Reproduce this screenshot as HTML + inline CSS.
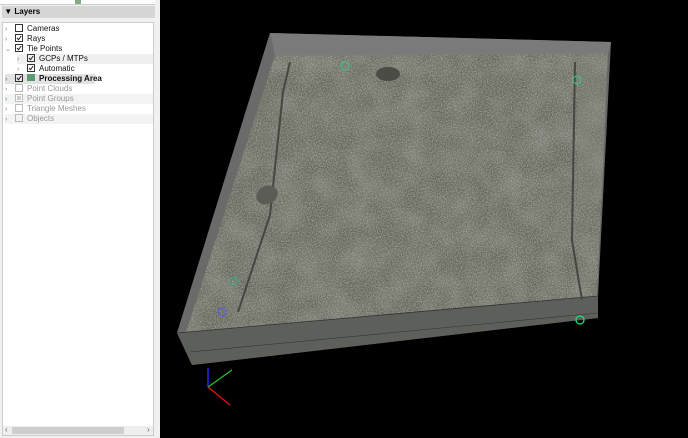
<!DOCTYPE html>
<html><head><style>
body{margin:0;width:688px;height:438px;background:#000;overflow:hidden;position:relative;font-family:"Liberation Sans",sans-serif;font-size:8px}
#panel{position:absolute;left:0;top:0;width:160px;height:438px;background:#f0f0f0}
#top{position:absolute;left:0;top:0;width:155px;height:4px;background:#fff;border-bottom:1px solid #ccc}
#hdr{position:absolute;left:2px;top:6px;width:153px;height:12px;background:#d6d6d6;font-weight:bold;font-size:8px;line-height:12px;color:#000}
#tree{position:absolute;left:2px;top:22px;width:152px;height:414px;background:#fff;border:1px solid #ccc;box-sizing:border-box}
.r{position:absolute;height:10px;line-height:10px;white-space:nowrap;color:#111}
.r.d{color:#999}
.cb{display:inline-block;width:6px;height:6px;border:1px solid #333;vertical-align:middle;margin:-2px 4px 0 0;position:relative}
.cb svg{position:absolute;left:0;top:0}
.d .cb{border-color:#bbb}
.ar{display:inline-block;width:10px;color:#888;font-size:7px}
#sb{position:absolute;left:3px;top:426px;width:150px;height:9px;background:#eee}
#sbt{position:absolute;left:12px;top:427px;width:112px;height:7px;background:#cdcdcd}
</style></head><body>
<div id="panel">
<div id="top"></div>
<div style="position:absolute;left:75px;top:0;width:6px;height:4px;background:#8a8"></div>
<div id="hdr">&nbsp;▼ Layers</div>
<div id="tree"></div>
<div class="r" style="left:5px;top:24px"><span class="ar">›</span><span class="cb"></span>Cameras</div>
<div class="r" style="left:5px;top:34px"><span class="ar">›</span><span class="cb"><svg width="6" height="6"><path d="M1 3 L2.5 4.7 L5.2 1" stroke="#222" fill="none"/></svg></span>Rays</div>
<div class="r" style="left:5px;top:44px"><span class="ar">⌄</span><span class="cb"><svg width="6" height="6"><path d="M1 3 L2.5 4.7 L5.2 1" stroke="#222" fill="none"/></svg></span>Tie Points</div>
<div class="r" style="left:17px;top:54px;width:136px;background:#f0f0f0"><span class="ar">›</span><span class="cb"><svg width="6" height="6"><path d="M1 3 L2.5 4.7 L5.2 1" stroke="#222" fill="none"/></svg></span>GCPs / MTPs</div>
<div class="r" style="left:17px;top:64px"><span class="ar">›</span><span class="cb"><svg width="6" height="6"><path d="M1 3 L2.5 4.7 L5.2 1" stroke="#222" fill="none"/></svg></span>Automatic</div>
<div class="r" style="left:5px;top:74px;width:90px;background:#e2e2e2;font-weight:bold"><span class="ar">›</span><span class="cb"><svg width="6" height="6"><path d="M1 3 L2.5 4.7 L5.2 1" stroke="#222" fill="none"/></svg></span><span style="display:inline-block;width:8px;height:7px;background:#5a9a70;vertical-align:middle;margin:-2px 4px 0 0"></span>Processing Area</div>
<div class="r d" style="left:5px;top:84px"><span class="ar">›</span><span class="cb"></span>Point Clouds</div>
<div class="r d" style="left:5px;top:94px;width:148px;background:#f3f3f3"><span class="ar" style="color:#39c">›</span><span class="cb" style="background:#ccc;box-shadow:inset 0 0 0 1px #fff"></span>Point Groups</div>
<div class="r d" style="left:5px;top:104px"><span class="ar">›</span><span class="cb"></span>Triangle Meshes</div>
<div class="r d" style="left:5px;top:114px;width:148px;background:#f3f3f3"><span class="ar">›</span><span class="cb"></span>Objects</div>
<div id="sb"></div><div id="sbt"></div>
<div class="r" style="left:5px;top:425px;color:#666">‹</div>
<div class="r" style="left:147px;top:425px;color:#666">›</div>
</div>
<svg style="position:absolute;left:0;top:0" width="688" height="438">
<defs>
<filter id="n" x="0" y="0" width="100%" height="100%">
<feTurbulence type="fractalNoise" baseFrequency="0.8" numOctaves="3" seed="3"/>
<feColorMatrix values="0 0 0 0 0.50  0 0 0 0 0.51  0 0 0 0 0.45  0 0 0 2 -0.7"/>
<feComposite in2="SourceGraphic" operator="in"/>
</filter>
<filter id="n2" x="0" y="0" width="100%" height="100%">
<feTurbulence type="fractalNoise" baseFrequency="0.04" numOctaves="2" seed="7"/>
<feColorMatrix values="0 0 0 0 0.3  0 0 0 0 0.32  0 0 0 0 0.28  0 0 0 1.2 -0.4"/>
<feComposite in2="SourceGraphic" operator="in"/>
</filter>
</defs>
<polygon points="270,33 611,42 598,296 598,318 192,365 177,333" fill="#666"/>
<polygon points="275,54 608,52 597,296 186,332" fill="#65675c"/>
<polygon points="275,54 608,52 597,296 186,332" fill="#fff" filter="url(#n2)" opacity="0.7"/>
<polygon points="275,54 608,52 597,296 186,332" fill="#fff" filter="url(#n)" opacity="0.7"/>
<polygon points="578,56 608,52 602,200 578,200" fill="#8a8a80" opacity="0.3"/>
<polygon points="270,33 611,42 608,54 275,56" fill="#7b7b7b" opacity="0.95"/>
<polygon points="270,33 275,56 186,332 177,333" fill="#6c6c6c" opacity="0.75"/>
<polygon points="177,333 598,296 598,318 192,365" fill="#5c5e58" opacity="0.85"/>
<line x1="177" y1="333" x2="598" y2="296" stroke="#333" stroke-width="0.8"/>
<line x1="190" y1="352" x2="598" y2="313" stroke="#333" stroke-width="0.6"/>
<path d="M290 62 L283 92 L270 215 L238 312 M575 62 L572 240 L582 300" stroke="#45483f" stroke-width="2" fill="none"/>
<ellipse cx="388" cy="74" rx="12" ry="7" fill="#4a4c45"/>
<ellipse cx="267" cy="195" rx="11" ry="9" fill="#5a5c55" transform="rotate(-30 267 195)"/>
<circle cx="345" cy="66" r="4" fill="none" stroke="#3c8" stroke-width="1"/>
<circle cx="577" cy="80" r="4" fill="none" stroke="#3c8" stroke-width="1"/>
<circle cx="234" cy="281" r="4" fill="none" stroke="#3a8" stroke-width="1"/>
<circle cx="222" cy="312" r="4" fill="none" stroke="#55e" stroke-width="1"/>
<circle cx="580" cy="320" r="4" fill="none" stroke="#2d7" stroke-width="1.3"/>
<line x1="208" y1="387" x2="208" y2="368" stroke="#22f" stroke-width="1.5"/>
<line x1="208" y1="387" x2="232" y2="370" stroke="#2c2" stroke-width="1.2"/>
<line x1="208" y1="387" x2="230" y2="405" stroke="#e11" stroke-width="1.2"/>
</svg>
</body></html>
